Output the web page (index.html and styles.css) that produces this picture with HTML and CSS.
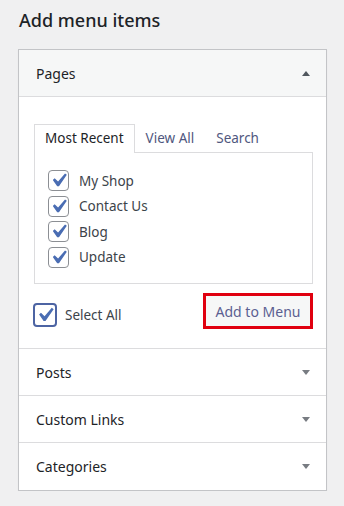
FILE: index.html
```html
<!DOCTYPE html>
<html lang="en">
<head>
  <meta charset="UTF-8" />
  <title>Add menu items</title>
  <link rel="stylesheet" href="styles.css">
</head>
<body>
  <div class="menu-items">
    <h2 class="page-title">Add menu items</h2>

    <div class="accordion">
      <!-- Pages (open) -->
      <div class="section open">
        <div class="section-title">
          <h3>Pages</h3>
          <span class="arrow up"></span>
        </div>
        <div class="section-body">
          <ul class="tabs">
            <li class="tab active">Most Recent</li>
            <li class="tab">View All</li>
            <li class="tab">Search</li>
          </ul>
          <div class="tab-panel">
            <label class="item"><span class="box"><svg viewBox="0 0 20 20"><path d="M14.83 4.89l1.34.94-5.81 8.38H9.02L5.78 9.670l1.34-1.25 2.57 2.4z"/></svg></span>My Shop</label>
            <label class="item"><span class="box"><svg viewBox="0 0 20 20"><path d="M14.83 4.89l1.34.94-5.81 8.38H9.02L5.78 9.67l1.34-1.25 2.57 2.4z"/></svg></span>Contact Us</label>
            <label class="item"><span class="box"><svg viewBox="0 0 20 20"><path d="M14.83 4.89l1.34.94-5.81 8.38H9.02L5.78 9.67l1.34-1.25 2.57 2.4z"/></svg></span>Blog</label>
            <label class="item"><span class="box"><svg viewBox="0 0 20 20"><path d="M14.83 4.89l1.34.94-5.81 8.38H9.02L5.78 9.67l1.34-1.25 2.57 2.4z"/></svg></span>Update</label>
          </div>
          <div class="actions">
            <label class="select-all"><span class="box big"><svg viewBox="0 0 20 20"><path d="M14.83 4.89l1.34.94-5.81 8.38H9.02L5.78 9.67l1.34-1.25 2.57 2.4z"/></svg></span>Select All</label>
            <button class="add-button">Add to Menu</button>
          </div>
        </div>
      </div>

      <div class="section">
        <div class="section-title">
          <h3>Posts</h3>
          <span class="arrow"></span>
        </div>
      </div>
      <div class="section">
        <div class="section-title">
          <h3>Custom Links</h3>
          <span class="arrow"></span>
        </div>
      </div>
      <div class="section">
        <div class="section-title">
          <h3>Categories</h3>
          <span class="arrow"></span>
        </div>
      </div>
    </div>
  </div>
</body>
</html>
```

FILE: styles.css
```css
body, html {
  margin: 0;
  background: #f0f0f1;
  font-family: 'Noto Sans', 'Open Sans', sans-serif;
  color: #1d2327;
}

.menu-items {
  padding: 0 17px 0 18px;
}

.page-title {
  margin: 0;
  padding: 6px 0 0 1px;
  height: 49px;
  box-sizing: border-box;
  font-size: 18px;
  font-weight: 500;
  line-height: 28px;
}

.accordion {
  background: #fff;
  border: 1px solid #c3c4c7;
  box-shadow: 0 1px 1px rgba(0, 0, 0, 0.05);
}

.section + .section {
  border-top: 1px solid #dcdcde;
}

.section-title {
  display: flex;
  align-items: center;
  justify-content: space-between;
  height: 46px;
  padding: 0 16px 0 17px;
}

.section:last-child .section-title {
  height: 47px;
}

.section.open .section-title {
  background: #f6f7f7;
  border-bottom: 1px solid #dcdcde;
}

.section-title h3 {
  margin: 0;
  font-size: 14px;
  font-weight: 400;
}

.arrow {
  width: 0;
  height: 0;
  border-left: 4px solid transparent;
  border-right: 4px solid transparent;
  border-top: 5px solid #787c82;
}

.arrow.up {
  border-top: none;
  border-bottom: 5px solid #50575e;
}

.section-body {
  padding: 27px 13px 19px 15px;
}

.tabs {
  list-style: none;
  margin: 0;
  padding: 0;
  display: flex;
  font-size: 13.5px;
}

.tab {
  height: 28px;
  line-height: 27px;
  padding: 0 10px;
  color: #50577e;
  border: 1px solid transparent;
  border-bottom: none;
  box-sizing: border-box;
}

.tab.active {
  color: #1d2327;
  border-color: #dcdcde;
  background: #fff;
  margin-bottom: -1px;
  height: 29px;
  position: relative;
}

.tab-panel {
  border: 1px solid #dcdcde;
  padding: 15px 13px 13px;
}

.item, .select-all {
  display: flex;
  align-items: center;
  font-size: 13.5px;
  color: #3c434a;
}

.item {
  height: 25.5px;
}

.box {
  width: 21px;
  height: 21px;
  border: 1px solid #8c8f94;
  border-radius: 4px;
  background: #fff;
  margin-right: 10px;
  box-sizing: border-box;
  display: flex;
  align-items: center;
  justify-content: center;
  overflow: hidden;
}

.box svg {
  width: 27px;
  height: 27px;
  fill: #4a6db3;
  flex: none;
}

.box.big {
  width: 24px;
  height: 24px;
  border: 2px solid #4d64a3;
  margin-right: 8px;
  margin-left: -1px;
}

.box.big svg {
  width: 28px;
  height: 28px;
}

.actions {
  display: flex;
  align-items: center;
  justify-content: space-between;
  margin-top: 9px;
}

.select-all {
  margin-top: 7px;
}

.add-button {
  font-family: inherit;
  font-size: 14px;
  color: #5b5f91;
  background: #f6f7f7;
  border: 3px solid #e0000f;
  padding: 0;
  height: 36px;
  width: 110px;
  white-space: nowrap;
  box-sizing: border-box;
  cursor: pointer;
}
```
